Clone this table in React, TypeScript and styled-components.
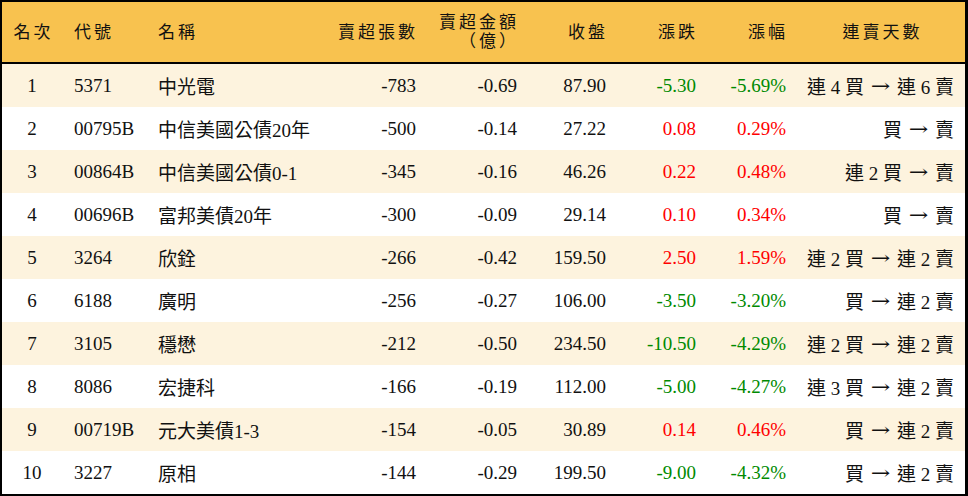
import styled, { createGlobalStyle } from 'styled-components';

type Row = {
  rank: number;
  code: string;
  name: string;
  lots: string;
  amount: string;
  close: string;
  change: string;
  pct: string;
  streak: [string, string];
};

const rows: Row[] = [
  { rank: 1, code: '5371', name: '中光電', lots: '-783', amount: '-0.69', close: '87.90', change: '-5.30', pct: '-5.69%', streak: ['連 4 買', '連 6 賣'] },
  { rank: 2, code: '00795B', name: '中信美國公債20年', lots: '-500', amount: '-0.14', close: '27.22', change: '0.08', pct: '0.29%', streak: ['買', '賣'] },
  { rank: 3, code: '00864B', name: '中信美國公債0-1', lots: '-345', amount: '-0.16', close: '46.26', change: '0.22', pct: '0.48%', streak: ['連 2 買', '賣'] },
  { rank: 4, code: '00696B', name: '富邦美債20年', lots: '-300', amount: '-0.09', close: '29.14', change: '0.10', pct: '0.34%', streak: ['買', '賣'] },
  { rank: 5, code: '3264', name: '欣銓', lots: '-266', amount: '-0.42', close: '159.50', change: '2.50', pct: '1.59%', streak: ['連 2 買', '連 2 賣'] },
  { rank: 6, code: '6188', name: '廣明', lots: '-256', amount: '-0.27', close: '106.00', change: '-3.50', pct: '-3.20%', streak: ['買', '連 2 賣'] },
  { rank: 7, code: '3105', name: '穩懋', lots: '-212', amount: '-0.50', close: '234.50', change: '-10.50', pct: '-4.29%', streak: ['連 2 買', '連 2 賣'] },
  { rank: 8, code: '8086', name: '宏捷科', lots: '-166', amount: '-0.19', close: '112.00', change: '-5.00', pct: '-4.27%', streak: ['連 3 買', '連 2 賣'] },
  { rank: 9, code: '00719B', name: '元大美債1-3', lots: '-154', amount: '-0.05', close: '30.89', change: '0.14', pct: '0.46%', streak: ['買', '連 2 賣'] },
  { rank: 10, code: '3227', name: '原相', lots: '-144', amount: '-0.29', close: '199.50', change: '-9.00', pct: '-4.32%', streak: ['買', '連 2 賣'] },
];

const App = () => {
  return (
    <>
      <GlobalStyle />
      <Board>
        <HeaderRow>
          <HeadCell $align="center">名次</HeadCell>
          <HeadCell $align="left">代號</HeadCell>
          <HeadCell $align="left">名稱</HeadCell>
          <HeadCell $align="right">賣超張數</HeadCell>
          <HeadCell $align="right">
            <HeadLines>
              <span>賣超金額</span>
              <span>（億）</span>
            </HeadLines>
          </HeadCell>
          <HeadCell $align="right">收盤</HeadCell>
          <HeadCell $align="right">漲跌</HeadCell>
          <HeadCell $align="right">漲幅</HeadCell>
          <HeadCell $align="center">連賣天數</HeadCell>
        </HeaderRow>

        {rows.map((row, i) => {
          const tone = row.change.startsWith('-') ? 'down' : 'up';
          return (
            <DataRow key={row.code} $shaded={i % 2 === 0}>
              <Cell $align="center">{row.rank}</Cell>
              <Cell $align="left">{row.code}</Cell>
              <Cell $align="left">{row.name}</Cell>
              <Cell $align="right">{row.lots}</Cell>
              <Cell $align="right">{row.amount}</Cell>
              <Cell $align="right">{row.close}</Cell>
              <Cell $align="right" $tone={tone}>{row.change}</Cell>
              <Cell $align="right" $tone={tone}>{row.pct}</Cell>
              <StreakCell $align="right">
                {row.streak[0]}
                <Arrow>→</Arrow>
                {row.streak[1]}
              </StreakCell>
            </DataRow>
          );
        })}
      </Board>
    </>
  );
};

export default App;

const GlobalStyle = createGlobalStyle`
  * {
    box-sizing: border-box;
  }
  body {
    margin: 0;
    background: #ffffff;
    font-family: "Liberation Serif", "Noto Sans CJK TC", serif;
  }
`;

const columns = '60px 84px 154px 127px 101px 89px 90px 90px 168px';

const Board = styled.div`
  width: 968px;
  height: 496px;
  border: 2px solid #000000;
  border-right-width: 3px;
  display: flex;
  flex-direction: column;
  color: #111111;
`;

const HeaderRow = styled.div`
  display: grid;
  grid-template-columns: ${columns};
  height: 62px;
  border-bottom: 2px solid #000000;
  background: #f8c24f;
`;

const DataRow = styled.div<{ $shaded: boolean }>`
  display: grid;
  grid-template-columns: ${columns};
  height: 43px;
  background: ${({ $shaded }) => ($shaded ? '#fdf3de' : '#ffffff')};
`;

type Align = 'left' | 'center' | 'right';

const justifyFor = (align: Align) =>
  align === 'left' ? 'flex-start' : align === 'right' ? 'flex-end' : 'center';

const HeadCell = styled.div<{ $align: Align }>`
  display: flex;
  align-items: center;
  justify-content: ${({ $align }) => justifyFor($align)};
  padding: ${({ $align }) =>
    $align === 'left' ? '0 0 0 12px' : $align === 'right' ? '0 9px 0 0' : '0 0 0 3px'};
  font-size: 17px;
  letter-spacing: 3px;
  line-height: 19px;
  white-space: nowrap;
`;

const HeadLines = styled.div`
  display: flex;
  flex-direction: column;
  align-items: flex-end;
  margin-top: -1px;
`;

const Cell = styled.div<{ $align: Align; $tone?: 'up' | 'down' }>`
  display: flex;
  align-items: center;
  justify-content: ${({ $align }) => justifyFor($align)};
  padding: ${({ $align }) =>
    $align === 'left' ? '0 0 0 12px' : $align === 'right' ? '0 11px 0 0' : '0'};
  font-size: 19px;
  white-space: pre;
  color: ${({ $tone }) =>
    $tone === 'up' ? '#ff0000' : $tone === 'down' ? '#008a00' : '#111111'};
`;

const StreakCell = styled(Cell)`
  padding-right: 11px;
`;

const Arrow = styled.span`
  display: inline-block;
  margin: 0 9px;
  font-family: "DejaVu Serif", serif;
  font-size: 18px;
  transform: scaleX(1.3);
`;
